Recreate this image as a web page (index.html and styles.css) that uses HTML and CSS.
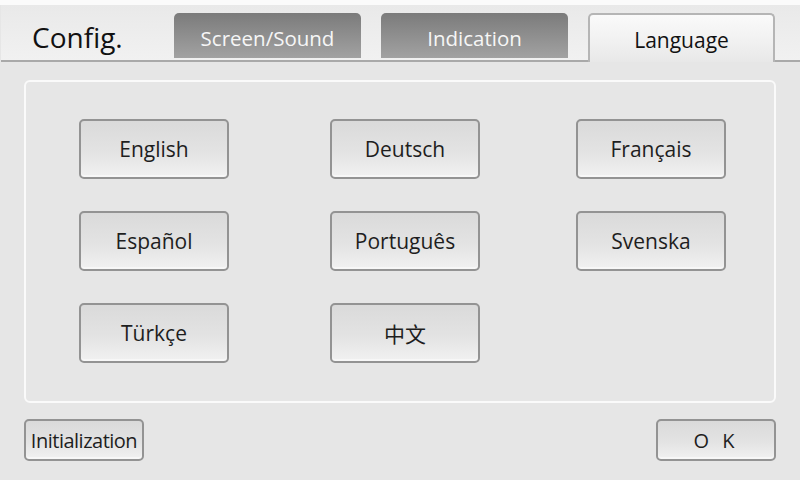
FILE: index.html
```html
<!DOCTYPE html>
<html lang="en">
<head>
  <meta charset="UTF-8">
  <title>Config. - Language</title>
  <link rel="stylesheet" href="styles.css">
</head>
<body>
  <div class="screen">
    <div class="header">
      <div class="title">Config.</div>
      <div class="tabs">
        <div class="tab">Screen/Sound</div>
        <div class="tab">Indication</div>
        <div class="tab active">Language</div>
      </div>
    </div>

    <div class="panel">
      <button class="btn lang">English</button>
      <button class="btn lang">Deutsch</button>
      <button class="btn lang">Français</button>
      <button class="btn lang">Español</button>
      <button class="btn lang">Português</button>
      <button class="btn lang">Svenska</button>
      <button class="btn lang">Türkçe</button>
      <button class="btn lang cjk">中文</button>
    </div>

    <div class="footer">
      <button class="btn small init">Initialization</button>
      <button class="btn small ok">O K</button>
    </div>
  </div>
</body>
</html>
```

FILE: styles.css
```css
body { margin: 0; background: #e6e6e6; font-family: "Open Sans", "Noto Sans", sans-serif; color: #1e1e1e; }
.screen { width: 800px; height: 480px; overflow: hidden; border-top: 5px solid #fbfbfb; box-sizing: border-box; }

.header { height: 55px; display: flex; align-items: flex-end; border-bottom: 2px solid #a9a9a9; margin-left: 1px;
  background: linear-gradient(#e9e9e9, #f1f1f1); }
.title { width: 173px; padding-left: 31px; box-sizing: border-box; align-self: center; font-size: 28px; margin-top: 8px; color: #111; }
.tabs { display: flex; gap: 20px; }
.tab { width: 187px; height: 45px; box-sizing: border-box; border-radius: 5px 5px 0 0; text-align: center; line-height: 50px;
  font-size: 20.5px; color: #f6f6f6; background: linear-gradient(#7b7b7b, #a2a2a2); }
.tab.active { height: 49px; margin-bottom: -2px; line-height: 51px; font-size: 21px; color: #111;
  border: 2px solid #b5b5b5; border-bottom: none; background: linear-gradient(#fafafa, #f0f0f0 60%, #e8e8e8); }

.panel { margin: 18px 24px 0; height: 323px; box-sizing: border-box; border: 2px solid #fafafa; border-radius: 6px;
  display: grid; grid-template-columns: 251px 246px 150px; grid-auto-rows: 60px; row-gap: 32px;
  padding: 37px 0 0 53px; align-content: start; }

.btn { font-family: inherit; color: #1e1e1e; border: 2px solid #939393; border-radius: 5px; padding: 0;
  background: linear-gradient(#dadada, #e3e3e3 55%, #f1f1f1); box-shadow: inset 0 -2px 0 #f7f7f7; }
.lang { width: 150px; font-size: 21px; }
.cjk { font-family: "Noto Sans CJK SC", sans-serif; font-size: 21px; }

.footer { display: flex; justify-content: space-between; padding: 16px 24px 0; }
.small { height: 42px; width: 120px; font-size: 20px; }
.init { letter-spacing: -0.5px; }
.ok { letter-spacing: 4px; }
```
